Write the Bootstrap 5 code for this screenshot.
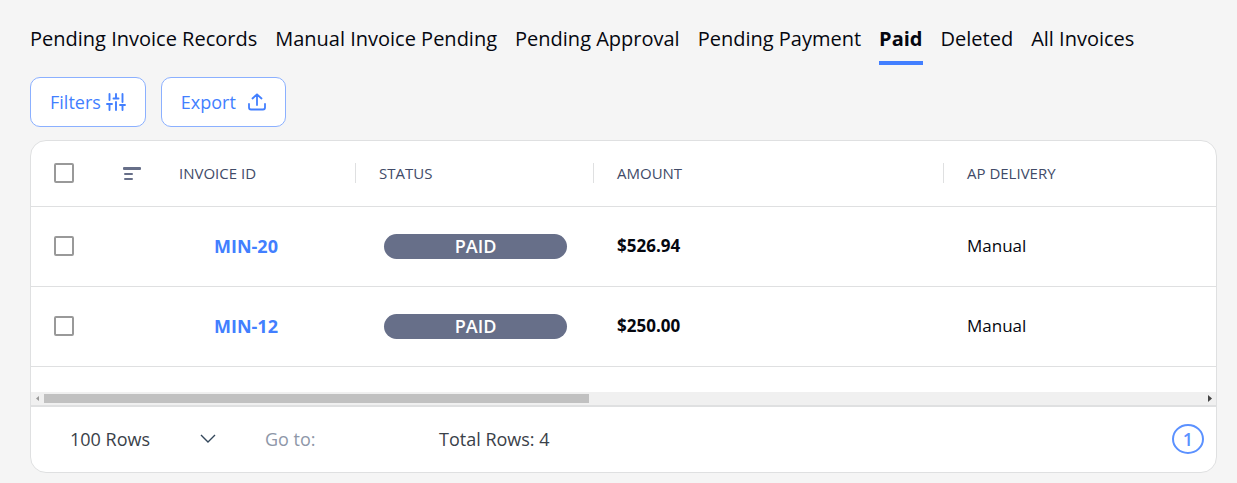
<!DOCTYPE html>
<html lang="en">
<head>
<meta charset="utf-8">
<meta name="viewport" content="width=device-width, initial-scale=1">
<title>Invoices</title>
<link href="https://cdn.jsdelivr.net/npm/bootstrap@5.3.0/dist/css/bootstrap.min.css" rel="stylesheet">
<style>
:root { --brand: #427fff; --line: #dfe0e1; --slate: #676f89; }
body { background: #f5f5f5; color: #05070f; font-family: "Open Sans", "Noto Sans", sans-serif; }
.page { padding: 22px 20px 10px 30px; }
.tabs { gap: 18px; }
.tabs .nav-link { padding: 1px 0 6px; color: #05070f; font-size: 20px; line-height: 32px; border-bottom: 4px solid transparent; }
.tabs .nav-link.active { font-weight: 700; border-color: var(--brand); }
.tools { gap: 15px; margin: 12px 0 13px; }
.btn-tool { height: 50px; padding: 0 19px; border: 1px solid #8bb0ff; border-radius: 10px; background: #fff; color: var(--brand); font-size: 18px; }
.panel { background: #fff; border: 1px solid var(--line); border-radius: 16px; overflow: hidden; }
.grid-table { table-layout: fixed; width: 100%; font-size: 17px; }
.grid-table tr { height: 80px; border-bottom: 1px solid var(--line); }
.grid-table thead tr { height: 65px; }
.grid-table th, .grid-table td { padding: 0 23px; white-space: nowrap; }
.grid-table th { font-size: 15px; line-height: 20px; font-weight: 400; color: #414b68; position: relative; }
.grid-table .split::after { content: ""; position: absolute; right: 0; top: 22px; height: 20px; border-right: 1px solid var(--line); }
.grid-table .id-cell { padding-left: 58px; font-size: 18px; }
.grid-table td a { color: var(--brand); font-weight: 700; text-decoration: none; }
.tick { appearance: none; display: block; width: 20px; height: 20px; margin: 0; border: 2px solid #999; border-radius: 2px; background: #fff; }
.tick:checked { background: var(--brand); }
.pill { display: block; width: 183px; height: 25px; line-height: 24px; margin-left: 5px; border-radius: 13px; background: var(--slate); color: #fff; font-size: 18px; font-weight: 600; text-align: center; }
.w-tick { width: 69px; } .w-sort { width: 56px; } .w-id { width: 200px; } .w-status { width: 238px; } .w-amount { width: 350px; }
.scroller { height: 13px; margin-top: 25px; background: #f0f0f0; padding: 0 2px 0 5px; }
.thumb { height: 9px; width: 46.3%; background: #c1c1c1; }
.foot { height: 67px; border-top: 2px solid var(--line); padding: 0 12px 0 39px; font-size: 18px; color: #3a4149; }
.rows-pick { appearance: none; border: 0; background: transparent; padding: 0; width: 146px; color: inherit; }
.goto { border: 0; padding: 0; width: 125px; margin-left: 49px; background: transparent; }
.goto::placeholder { color: #8e97a8; opacity: 1; }
.total { margin-left: 49px; }
.page-no { width: 32px; height: 30px; border: 2px solid #5b91ff; border-radius: 50%; background: #fff; color: #5b91ff; font-weight: 600; line-height: 26px; padding: 0; }
.chev { margin-left: -16px; pointer-events: none; }
</style>
</head>
<body>
<main class="page">
  <nav class="nav tabs" aria-label="Invoice views">
    <a class="nav-link" href="#">Pending Invoice Records</a>
    <a class="nav-link" href="#">Manual Invoice Pending</a>
    <a class="nav-link" href="#">Pending Approval</a>
    <a class="nav-link" href="#">Pending Payment</a>
    <a class="nav-link active" href="#" aria-current="page">Paid</a>
    <a class="nav-link" href="#">Deleted</a>
    <a class="nav-link" href="#">All Invoices</a>
  </nav>
  <div class="d-flex tools">
    <button type="button" class="btn btn-tool d-flex align-items-center gap-1">Filters
      <svg width="21" height="18" viewBox="0 0 21 18" fill="none" stroke="currentColor" stroke-width="1.900" stroke-linecap="round" aria-hidden="true"><path d="M4.500 1v6M2 11h5M4.500 11v6M11 1v4M8.500 5.500h5M11 9v8M17.500 1v8M15 12h5M17.500 12v5"/></svg>
    </button>
    <button type="button" class="btn btn-tool d-flex align-items-center gap-2">Export
      <svg class="ms-1" width="18" height="18" viewBox="0 0 18 18" fill="none" stroke="currentColor" stroke-width="1.800" stroke-linecap="round" stroke-linejoin="round" aria-hidden="true"><path d="M9 12V1.500M4.500 5.500 9 1.300l4.500 4.200M1 11v3.500A2 2 0 0 0 3 16.500h12a2 2 0 0 0 2-2V11"/></svg>
    </button>
  </div>
  <section class="panel">
    <table class="grid-table">
      <colgroup><col class="w-tick"><col class="w-sort"><col class="w-id"><col class="w-status"><col class="w-amount"><col></colgroup>
      <thead>
        <tr>
          <th><input type="checkbox" class="tick" aria-label="Select all invoices"></th>
          <th><svg class="d-block" width="18" height="14" viewBox="0 0 18 14" fill="#676f89" role="img" aria-label="Sort"><rect y="1" width="18" height="3" rx="1"/><rect x="1" y="7" width="9" height="2" rx="1"/><rect x="1" y="12" width="9" height="2" rx="1"/></svg></th>
          <th class="split">INVOICE ID</th>
          <th class="split">STATUS</th>
          <th class="split">AMOUNT</th>
          <th>AP DELIVERY</th>
        </tr>
      </thead>
      <tbody>
        <tr>
          <td><input type="checkbox" class="tick" aria-label="Select MIN-20"></td><td></td>
          <td class="id-cell"><a href="#">MIN-20</a></td>
          <td><span class="pill">PAID</span></td>
          <td class="fw-bold">$526.94</td><td>Manual</td>
        </tr>
        <tr>
          <td><input type="checkbox" class="tick" aria-label="Select MIN-12"></td><td></td>
          <td class="id-cell"><a href="#">MIN-12</a></td>
          <td><span class="pill">PAID</span></td>
          <td class="fw-bold">$250.00</td><td>Manual</td>
        </tr>
      </tbody>
    </table>
    <div class="scroller d-flex align-items-center justify-content-between" aria-hidden="true">
      <svg width="8" height="7" viewBox="0 0 8 7"><path d="M3 1v5L0 3.500z" fill="#999"/></svg>
      <div class="thumb me-auto"></div>
      <svg width="6" height="7" viewBox="0 0 6 7"><path d="M0 0v7l4-3.500z" fill="#444"/></svg>
    </div>
    <div class="foot d-flex align-items-center">
      <select class="rows-pick" aria-label="Rows per page"><option>100 Rows</option><option>50 Rows</option></select>
      <svg class="chev" width="16" height="10" viewBox="0 0 16 10" fill="none" stroke="#33475b" stroke-width="1.400" aria-hidden="true"><path d="m1 1 7 7 7-7"/></svg>
      <input class="goto" type="text" placeholder="Go to:" aria-label="Go to page">
      <span class="total me-auto">Total Rows: 4</span>
      <button type="button" class="page-no" aria-current="page">1</button>
    </div>
  </section>
</main>
<script src="https://cdn.jsdelivr.net/npm/bootstrap@5.3.0/dist/js/bootstrap.bundle.min.js"></script>
</body>
</html>
